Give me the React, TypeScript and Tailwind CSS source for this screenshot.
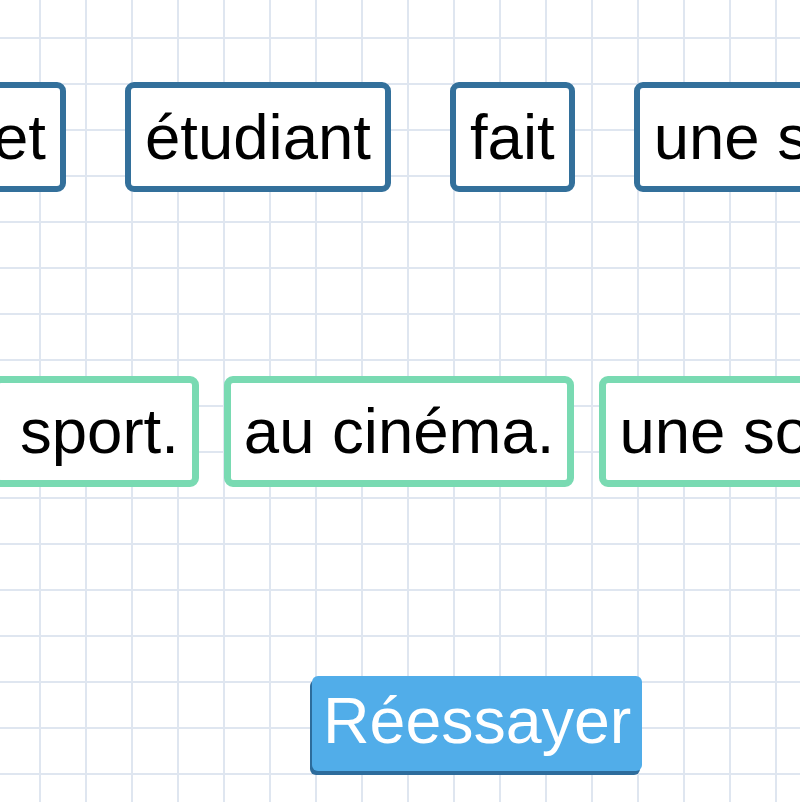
import React from "react";

const topWords = ["et", "étudiant", "fait", "une sortie"];
const bottomWords = ["sport.", "au cinéma.", "une soirée."];

export default function App() {
  return (
    <div
      className="relative h-[802px] w-[800px] overflow-hidden bg-white bg-[linear-gradient(to_right,#dfe6f0_2px,transparent_2px),linear-gradient(to_bottom,#dfe6f0_2px,transparent_2px)] bg-[size:46px_46px] bg-[position:39px_37px] font-['Liberation_Sans',Arial,sans-serif]"
    >
      <div className="flex flex-col pt-[82px]">
        <div className="ml-[-27px] flex gap-[59px] whitespace-nowrap">
          {topWords.map((w) => (
            <div
              key={w}
              className="shrink-0 rounded-[9px] border-[6px] border-[#33709b] bg-white px-[14px] py-[13px] text-[63.5px] leading-[72px] text-black"
            >
              {w}
            </div>
          ))}
        </div>
        <div className="ml-[-8px] mt-[184px] flex gap-[25px] whitespace-nowrap">
          {bottomWords.map((w) => (
            <div
              key={w}
              className="shrink-0 rounded-[9px] border-[7px] border-[#79dab2] bg-white px-[13px] py-[13px] text-[63.5px] leading-[71px] text-black first:pl-[21px]"
            >
              {w}
            </div>
          ))}
        </div>
        <div className="mt-[189px] flex pl-[312px]">
          <button className="rounded-[6px] bg-[#51ade9] px-[11px] pt-[9px] pb-[13px] text-[64.5px] leading-[73px] text-white shadow-[-2px_4px_0_#2d6c9c]">
            Réessayer
          </button>
        </div>
      </div>
    </div>
  );
}
